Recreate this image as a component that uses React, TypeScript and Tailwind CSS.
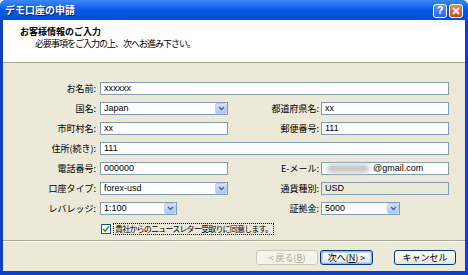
import React from 'react';

const jp = { fontFamily: '"Noto Sans CJK JP", "Noto Sans", sans-serif' };
const latin = { fontFamily: '"Liberation Sans", "Noto Sans CJK JP", sans-serif' };

function Label({ text, className = '' }: { text: string; className?: string }) {
    return (
        <div className={`text-right text-[9px] leading-[13px] text-black whitespace-nowrap ${className}`} style={jp}>
            {text}
        </div>
    );
}

function TextBox({ value, className = '', readOnly = false }: { value: React.ReactNode; className?: string; readOnly?: boolean }) {
    return (
        <div
            className={`h-[13px] border border-[#7F9DB9] px-[3px] flex items-center text-[9px] leading-[11px] text-black ${readOnly ? 'bg-[#ECE9D8]' : 'bg-white'} ${className}`}
            style={latin}
        >
            {value}
        </div>
    );
}

function Combo({ value, className = '' }: { value: string; className?: string }) {
    return (
        <div className={`h-[13px] border border-[#7F9DB9] bg-white flex items-center ${className}`} style={latin}>
            <span className="flex-1 px-[3px] text-[9px] leading-[11px] text-black">{value}</span>
            <div className="h-[11px] w-[12px] rounded-[2px] border border-[#BCCFF6] bg-gradient-to-b from-[#D2E0FD] to-[#AFC6F5] flex items-center justify-center">
                <svg width="7" height="5" viewBox="0 0 7 5">
                    <path d="M1 1 L3.5 3.5 L6 1" stroke="#4D6185" strokeWidth="1.4" fill="none" />
                </svg>
            </div>
        </div>
    );
}

function Button({ children, disabled = false, focused = false, className = '' }: { children: React.ReactNode; disabled?: boolean; focused?: boolean; className?: string }) {
    return (
        <div
            className={`h-[15px] rounded-[3px] border flex items-center justify-center text-[9px] leading-[11px] whitespace-nowrap ${disabled
                ? 'border-[#C9C7BA] bg-[#F5F4EA] text-[#ACA899]'
                : 'border-[#003C74] bg-gradient-to-b from-white to-[#E6E5DD] text-black'
                } ${focused ? 'shadow-[inset_0_0_0_1px_#98B8EA,inset_0_0_0_2px_#C2D4F4]' : ''} ${className}`}
            style={jp}
        >
            {children}
        </div>
    );
}

export default function App() {
    return (
        <div className="w-[468px] h-[275px] flex flex-col bg-[#0A3FD2] rounded-t-[6px] overflow-hidden select-none">
            {/* Title bar */}
            <div className="h-[20px] flex items-center justify-between pl-[5px] pr-[5px] bg-gradient-to-b from-[#3B8AF7] via-[#0559E6] to-[#0350D9]">
                <span className="text-white font-bold text-[10px] leading-[12px] [text-shadow:1px_1px_0_#0A1E80]" style={jp}>
                    デモ口座の申請
                </span>
                <div className="flex gap-[2px] pt-[1px]">
                    <div className="w-[14px] h-[14px] rounded-[3px] border border-white bg-gradient-to-b from-[#5C98F8] to-[#2765E2] flex items-center justify-center text-white font-bold text-[11px] leading-none" style={latin}>
                        ?
                    </div>
                    <div className="w-[14px] h-[14px] rounded-[3px] border border-white bg-gradient-to-b from-[#E9875E] to-[#CF4516] flex items-center justify-center">
                        <svg width="8" height="8" viewBox="0 0 8 8">
                            <path d="M1 1 L7 7 M7 1 L1 7" stroke="white" strokeWidth="1.8" />
                        </svg>
                    </div>
                </div>
            </div>

            {/* Body */}
            <div className="flex-1 flex flex-col mx-[3px] mb-[4px] bg-[#ECE9D8]">
                {/* Header */}
                <div className="h-[43px] bg-white border-b border-[#ACA899] pt-[6px] pl-[17px]" style={jp}>
                    <div className="text-[9px] leading-[12px] font-bold text-black">お客様情報のご入力</div>
                    <div className="text-[9px] leading-[11px] text-black pl-[15px] tracking-[-1px]">必要事項をご入力の上、次へお進み下さい。</div>
                </div>

                {/* Form */}
                <div className="flex-1 pt-[19px]">
                    <div className="grid grid-cols-[97px_128px_93px_128px] auto-rows-[13px] gap-y-[7px] items-center">
                        <Label text="お名前:" className="pr-[4px]" />
                        <TextBox value="xxxxxx" className="col-span-3" />

                        <Label text="国名:" className="pr-[4px]" />
                        <Combo value="Japan" />
                        <Label text="都道府県名:" className="pr-[2px]" />
                        <TextBox value="xx" />

                        <Label text="市町村名:" className="pr-[4px]" />
                        <TextBox value="xx" />
                        <Label text="郵便番号:" className="pr-[2px]" />
                        <TextBox value="111" />

                        <Label text="住所(続き):" className="pr-[4px]" />
                        <TextBox value="111" className="col-span-3" />

                        <Label text="電話番号:" className="pr-[4px]" />
                        <TextBox value="000000" />
                        <Label text="E-メール:" className="pr-[2px]" />
                        <TextBox
                            value={
                                <>
                                    <span className="w-[42px] h-[9px] ml-[2px] mr-[4px] rounded-[4px] bg-[#C9C9C9] blur-[2px]" />
                                    <span>@gmail.com</span>
                                </>
                            }
                        />

                        <Label text="口座タイプ:" className="pr-[4px]" />
                        <Combo value="forex-usd" />
                        <Label text="通貨種別:" className="pr-[2px]" />
                        <TextBox value="USD" readOnly />

                        <Label text="レバレッジ:" className="pr-[4px]" />
                        <div>
                            <Combo value="1:100" className="w-[77px]" />
                        </div>
                        <Label text="証拠金:" className="pr-[2px]" />
                        <div>
                            <Combo value="5000" className="w-[79px]" />
                        </div>

                        <div />
                        <div className="col-span-3 flex items-center gap-[2px] pl-[1px]">
                            <div className="w-[10px] h-[10px] border border-[#1C5180] bg-white flex items-center justify-center">
                                <svg width="8" height="8" viewBox="0 0 8 8">
                                    <path d="M1 4 L3 6 L7 1.5" stroke="#21A121" strokeWidth="1.6" fill="none" />
                                </svg>
                            </div>
                            <span className="border border-dotted border-black px-[1px] text-[8px] leading-[10px] text-black tracking-[-0.8px]" style={jp}>
                                貴社からのニュースレター受取りに同意します。
                            </span>
                        </div>
                    </div>
                </div>

                {/* Separator */}
                <div className="border-t border-[#ACA899] border-b border-b-white" />

                {/* Buttons */}
                <div className="h-[29px] flex items-start justify-end pt-[8px] pr-[9px]">
                    <Button disabled className="w-[62px]">&lt; 戻る(<u>B</u>)</Button>
                    <Button focused className="w-[53px] ml-[2px]">次へ(<u>N</u>) &gt;</Button>
                    <Button className="w-[62px] ml-[21px]">キャンセル</Button>
                </div>
            </div>
        </div>
    );
}
